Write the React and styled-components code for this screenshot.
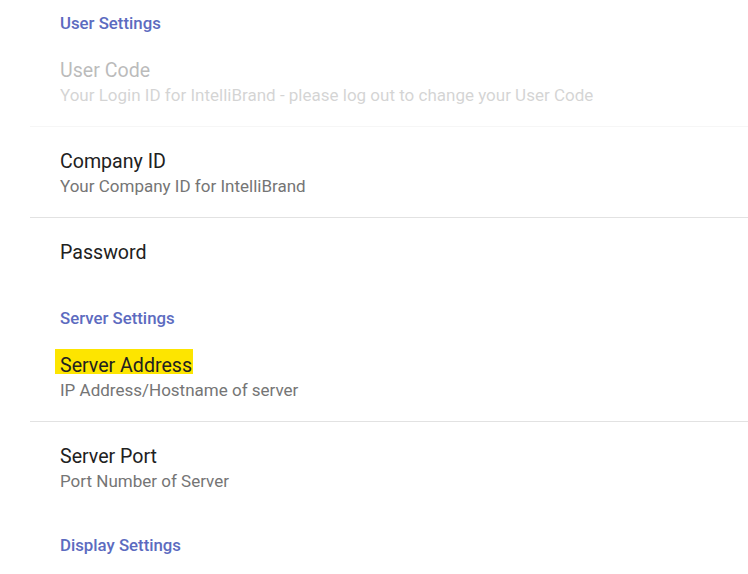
import React from "react";
import styled, { createGlobalStyle } from "styled-components";

const Global = createGlobalStyle`
  html, body { margin: 0; padding: 0; background: #ffffff; }
  body { font-family: Roboto, "Noto Sans", "Liberation Sans", sans-serif; -webkit-font-smoothing: antialiased; }
`;

const Screen = styled.div`
  width: 748px;
  height: 574px;
  overflow: hidden;
  background: #ffffff;
  padding-top: 13px;
  box-sizing: border-box;
`;

const CategoryHeader = styled.div`
  padding: ${(p) => p.$top || 0}px 0 3px 60px;
  font-size: 16.8px;
  line-height: 20px;
  font-weight: 500;
  color: #5c6bc0;
`;

const Item = styled.div`
  margin-left: 30px;
  padding: 23px 0 18px 30px;
  min-height: 90px;
  box-sizing: border-box;
  border-bottom: ${(p) => (p.$divider ? "1px solid #e2e2e2" : "none")};
  opacity: ${(p) => (p.$disabled ? 0.3 : 1)};
`;

const Title = styled.div`
  font-size: 19.6px;
  line-height: 24px;
  color: #212121;
  ${(p) =>
    p.$highlight &&
    `
    width: fit-content;
    margin: -5px 0 0 -5px;
    padding: 5px 1px 0 5px;
    background: linear-gradient(#fde500, #fde500) top left / 100% 25px no-repeat;
  `}
`;

const Summary = styled.div`
  font-size: 17px;
  line-height: 25px;
  color: #757575;
`;

const Pref = ({ title, summary, divider, disabled, highlight }) => (
  <Item $divider={divider} $disabled={disabled}>
    <Title $highlight={highlight}>{title}</Title>
    {summary && <Summary>{summary}</Summary>}
  </Item>
);

export default function App() {
  return (
    <>
      <Global />
      <Screen>
        <CategoryHeader>User Settings</CategoryHeader>
        <Pref
          title="User Code"
          summary="Your Login ID for IntelliBrand - please log out to change your User Code"
          divider
          disabled
        />
        <Pref title="Company ID" summary="Your Company ID for IntelliBrand" divider />
        <Pref title="Password" />
        <CategoryHeader>Server Settings</CategoryHeader>
        <Pref title="Server Address" summary="IP Address/Hostname of server" divider highlight />
        <Pref title="Server Port" summary="Port Number of Server" />
        <CategoryHeader $top={23}>Display Settings</CategoryHeader>
      </Screen>
    </>
  );
}
